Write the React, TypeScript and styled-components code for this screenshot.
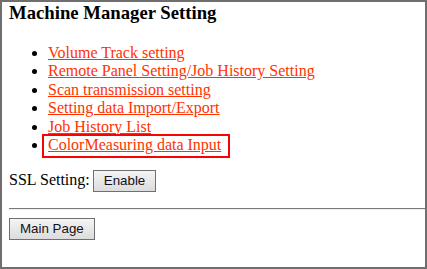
import styled, { createGlobalStyle } from "styled-components";

const GlobalStyle = createGlobalStyle`
  html, body {
    margin: 0;
    padding: 0;
    background: #ffffff;
  }
`;

const Frame = styled.div`
  box-sizing: border-box;
  width: 427px;
  height: 269px;
  border: 2px solid #6f6f6f;
  padding: 0 0 0 7px;
  overflow: hidden;

  font-family: "Liberation Serif", "Times New Roman", serif;
  font-size: 16px;
  color: #000000;
`;

const Title = styled.h3`
  margin: 0 0 20px;

  font-size: 18.72px;
  font-weight: 700;
`;

const MenuList = styled.ul`
  margin: 0 0 15px;
  padding-left: 39px;
  list-style: disc;
`;

const MenuItem = styled.li`
  line-height: 18.4px;
`;

const MenuLink = styled.a<{ $focused?: boolean }>`
  position: relative;
  color: #ff3300;
  text-decoration: underline;
  cursor: pointer;

  ${({ $focused }) =>
    $focused &&
    `
    &::after {
      content: "";
      position: absolute;
      left: -6px;
      right: -9px;
      top: -2px;
      bottom: -5px;
      border: 2px solid #ff0000;
      pointer-events: none;
    }
  `}
`;

const SettingRow = styled.div`
  margin: 0;
  line-height: 22px;
`;

const Button = styled.button`
  box-sizing: border-box;
  height: 22px;
  padding: 0 10px;

  font-family: "Liberation Sans", Arial, sans-serif;
  font-size: 13.33px;
  color: #111122;

  background: linear-gradient(#f4f4f4, #dcdcdc);
  border: 1px solid #707070;
  border-radius: 0;
`;

const SslButton = styled(Button)`
  margin-left: 3px;
`;

const Divider = styled.hr`
  margin: 16px 0 8px;
  border: 0;
  border-top: 1px solid #7a7a7a;
  border-bottom: 1px solid #eeeeee;
`;

const menu = [
  "Volume Track setting",
  "Remote Panel Setting/Job History Setting",
  "Scan transmission setting",
  "Setting data Import/Export",
  "Job History List",
  "ColorMeasuring data Input",
];

const App = () => {
  return (
    <>
      <GlobalStyle />
      <Frame>
        <Title>Machine Manager Setting</Title>
        <MenuList>
          {menu.map((label, i) => (
            <MenuItem key={label}>
              <MenuLink $focused={i === menu.length - 1}>{label}</MenuLink>
            </MenuItem>
          ))}
        </MenuList>
        <SettingRow>
          SSL Setting:<SslButton>Enable</SslButton>
        </SettingRow>
        <Divider />
        <Button>Main Page</Button>
      </Frame>
    </>
  );
};

export default App;
